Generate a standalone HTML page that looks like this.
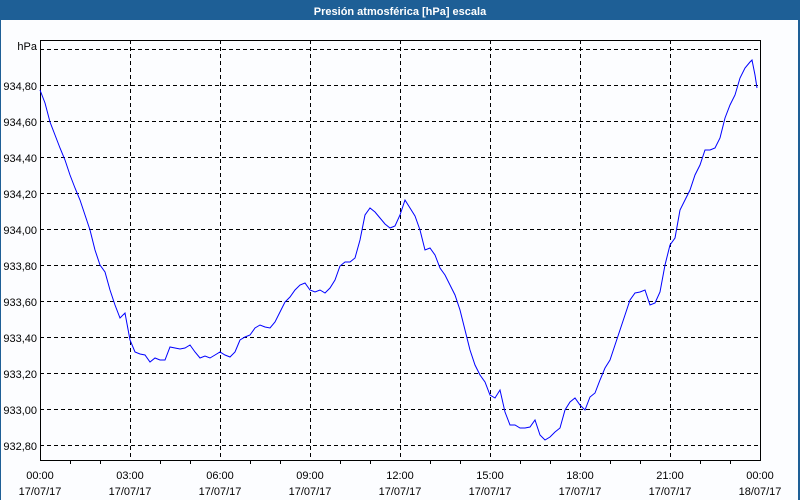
<!DOCTYPE html>
<html><head><meta charset="utf-8"><style>
html,body{margin:0;padding:0;width:800px;height:500px;overflow:hidden;background:#fff;}
svg{display:block;}
text{font-family:"Liberation Sans",sans-serif;font-size:11px;fill:#000;}
</style></head><body>
<svg width="800" height="500" xmlns="http://www.w3.org/2000/svg">
<rect x="0" y="0" width="800" height="500" fill="#1e5f96"/>
<rect x="1" y="20" width="797" height="480" fill="#fcfdff"/>
<text x="400" y="15" text-anchor="middle" style="fill:#fff;font-weight:bold;font-size:11px">Presión atmosférica [hPa] escala</text>
<g stroke="#000" stroke-width="1" stroke-dasharray="4,3" fill="none">
<line x1="40" y1="49.5" x2="760" y2="49.5"/>
<line x1="40" y1="85.5" x2="760" y2="85.5"/>
<line x1="40" y1="121.5" x2="760" y2="121.5"/>
<line x1="40" y1="157.5" x2="760" y2="157.5"/>
<line x1="40" y1="193.5" x2="760" y2="193.5"/>
<line x1="40" y1="229.5" x2="760" y2="229.5"/>
<line x1="40" y1="265.5" x2="760" y2="265.5"/>
<line x1="40" y1="301.5" x2="760" y2="301.5"/>
<line x1="40" y1="337.5" x2="760" y2="337.5"/>
<line x1="40" y1="373.5" x2="760" y2="373.5"/>
<line x1="40" y1="409.5" x2="760" y2="409.5"/>
<line x1="40" y1="445.5" x2="760" y2="445.5"/>
<line x1="130.5" y1="40" x2="130.5" y2="460"/>
<line x1="220.5" y1="40" x2="220.5" y2="460"/>
<line x1="310.5" y1="40" x2="310.5" y2="460"/>
<line x1="400.5" y1="40" x2="400.5" y2="460"/>
<line x1="490.5" y1="40" x2="490.5" y2="460"/>
<line x1="580.5" y1="40" x2="580.5" y2="460"/>
<line x1="670.5" y1="40" x2="670.5" y2="460"/>
</g>
<rect x="40.5" y="40.5" width="720" height="420" fill="none" stroke="#000"/>
<g stroke="#000">
<line x1="70.5" y1="460" x2="70.5" y2="464"/><line x1="100.5" y1="460" x2="100.5" y2="464"/>
<line x1="160.5" y1="460" x2="160.5" y2="464"/><line x1="190.5" y1="460" x2="190.5" y2="464"/>
<line x1="250.5" y1="460" x2="250.5" y2="464"/><line x1="280.5" y1="460" x2="280.5" y2="464"/>
<line x1="340.5" y1="460" x2="340.5" y2="464"/><line x1="370.5" y1="460" x2="370.5" y2="464"/>
<line x1="430.5" y1="460" x2="430.5" y2="464"/><line x1="460.5" y1="460" x2="460.5" y2="464"/>
<line x1="520.5" y1="460" x2="520.5" y2="464"/><line x1="550.5" y1="460" x2="550.5" y2="464"/>
<line x1="610.5" y1="460" x2="610.5" y2="464"/><line x1="640.5" y1="460" x2="640.5" y2="464"/>
<line x1="700.5" y1="460" x2="700.5" y2="464"/><line x1="730.5" y1="460" x2="730.5" y2="464"/>
</g>
<g text-anchor="end">
<text x="37" y="50">hPa</text>
<text x="37" y="90">934,80</text>
<text x="37" y="126">934,60</text>
<text x="37" y="162">934,40</text>
<text x="37" y="198">934,20</text>
<text x="37" y="234">934,00</text>
<text x="37" y="270">933,80</text>
<text x="37" y="306">933,60</text>
<text x="37" y="342">933,40</text>
<text x="37" y="378">933,20</text>
<text x="37" y="414">933,00</text>
<text x="37" y="450">932,80</text>
</g>
<g text-anchor="middle">
<text x="40" y="479">00:00</text><text x="40" y="495">17/07/17</text>
<text x="130" y="479">03:00</text><text x="130" y="495">17/07/17</text>
<text x="220" y="479">06:00</text><text x="220" y="495">17/07/17</text>
<text x="310" y="479">09:00</text><text x="310" y="495">17/07/17</text>
<text x="400" y="479">12:00</text><text x="400" y="495">17/07/17</text>
<text x="490" y="479">15:00</text><text x="490" y="495">17/07/17</text>
<text x="580" y="479">18:00</text><text x="580" y="495">17/07/17</text>
<text x="670" y="479">21:00</text><text x="670" y="495">17/07/17</text>
<text x="760" y="479">00:00</text><text x="760" y="495">18/07/17</text>
</g>
<polyline fill="none" stroke="#0000ff" stroke-width="1" points="40,90 45,103 50,122 55,135 60,148 65,160 70,175 75,188 80,200 85,215 90,230 95,250 100,265 105,272 110,290 115,305 120,318 125,313 130,340 135,352 140,354 145,355 150,362 155,358 160,360 165,360 170,347 175,348 180,349 185,348 190,345 195,352 200,358 205,356 210,358 215,355 220,352 225,355 230,357 235,352 240,340 245,337 250,335 255,328 260,325 265,327 270,328 275,322 280,312 285,302 290,297 295,290 300,285 305,283 310,290 315,292 320,290 325,293 330,288 335,280 340,266 345,262 350,262 355,258 360,240 365,215 370,208 375,212 380,218 385,224 390,228 395,226 400,215 405,200 410,208 415,216 420,230 425,250 430,248 435,255 440,268 445,275 450,285 455,295 460,310 465,330 470,350 475,365 480,375 485,382 490,395 495,398 500,390 505,412 510,425 515,425 520,428 525,428 530,427 535,420 540,435 545,440 550,437 555,432 560,428 565,410 570,402 575,398 580,405 585,410 590,397 595,393 600,380 605,368 610,360 615,345 620,330 625,315 630,300 635,293 640,292 645,290 650,305 655,303 660,292 665,265 670,245 675,238 680,210 685,200 690,190 695,175 700,165 705,150 710,150 715,148 720,138 725,118 730,105 735,95 740,78 745,68 750,62 752,60 755,75 757,88"/>
</svg>
</body></html>
